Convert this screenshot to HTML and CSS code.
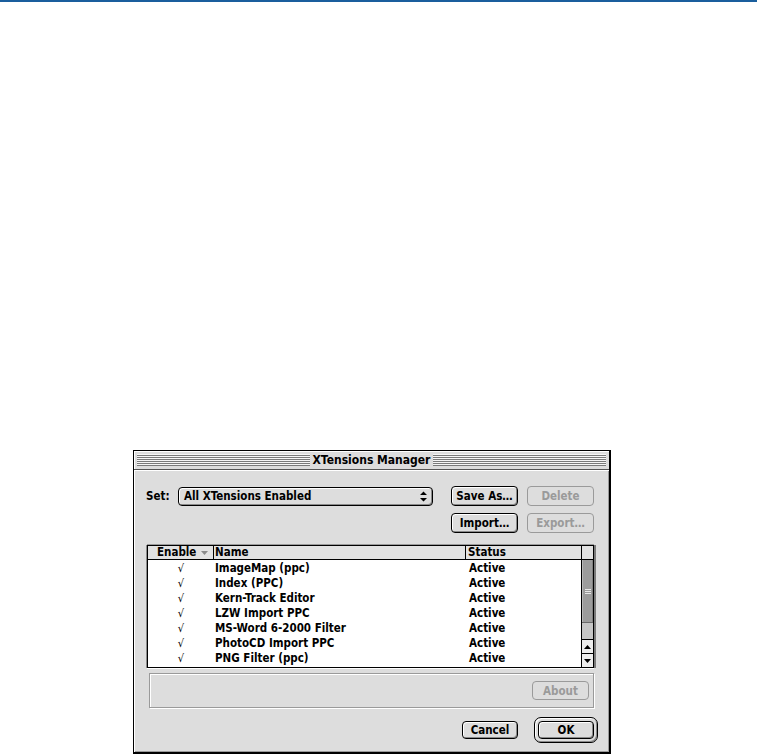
FILE: index.html
```html
<!DOCTYPE html>
<html>
<head>
<meta charset="utf-8">
<title>XTensions Manager</title>
<link rel="stylesheet" href="styles.css">
</head>
<body>
<div class="topbar"></div>
<div class="stage">
  <div class="dialog">
    <div class="titlebar">
      <div class="stripes"></div>
      <div class="title">XTensions Manager</div>
      <div class="stripes"></div>
    </div>
    <div class="content">
      <div class="row row1">
        <span class="label">Set:</span>
        <div class="popup">
          <span class="popup-text">All XTensions Enabled</span>
          <svg class="popup-arrows" width="7" height="11" viewBox="0 0 7 11"><path d="M0 4 L3.5 0.5 L7 4 Z M0 7 L7 7 L3.5 10.5 Z" fill="#000"/></svg>
        </div>
        <div class="btns">
          <button class="btn">Save As…</button>
          <button class="btn disabled">Delete</button>
        </div>
      </div>
      <div class="row row2">
        <div class="btns">
          <button class="btn">Import…</button>
          <button class="btn disabled">Export…</button>
        </div>
      </div>
      <div class="list">
        <div class="list-head">
          <div class="hcell c-enable">Enable<svg class="sort" width="7" height="4" viewBox="0 0 7 4"><path d="M0 0 L7 0 L3.5 4 Z" fill="#8a8a8a"/></svg></div>
          <div class="hcell c-name">Name</div>
          <div class="hcell c-status">Status</div>
          <div class="hcell c-scroll"></div>
        </div>
        <div class="list-body">
          <div class="rows">
            <div class="lrow"><span class="chk">√</span><span class="nm">ImageMap (ppc)</span><span class="st">Active</span></div>
            <div class="lrow"><span class="chk">√</span><span class="nm">Index (PPC)</span><span class="st">Active</span></div>
            <div class="lrow"><span class="chk">√</span><span class="nm">Kern-Track Editor</span><span class="st">Active</span></div>
            <div class="lrow"><span class="chk">√</span><span class="nm">LZW Import PPC</span><span class="st">Active</span></div>
            <div class="lrow"><span class="chk">√</span><span class="nm">MS-Word 6-2000 Filter</span><span class="st">Active</span></div>
            <div class="lrow"><span class="chk">√</span><span class="nm">PhotoCD Import PPC</span><span class="st">Active</span></div>
            <div class="lrow"><span class="chk">√</span><span class="nm">PNG Filter (ppc)</span><span class="st">Active</span></div>
          </div>
          <div class="scrollbar">
            <div class="thumb"><div class="grip"></div></div>
            <div class="track"></div>
            <div class="arrow"><svg width="7" height="4" viewBox="0 0 7 4"><path d="M0 4 L3.5 0 L7 4 Z" fill="#000"/></svg></div>
            <div class="arrow"><svg width="7" height="4" viewBox="0 0 7 4"><path d="M0 0 L7 0 L3.5 4 Z" fill="#000"/></svg></div>
          </div>
        </div>
      </div>
      <div class="infobox">
        <button class="btn disabled about">About</button>
      </div>
      <div class="row bottom">
        <button class="btn cancel">Cancel</button>
        <div class="default-ring"><button class="btn ok">OK</button></div>
      </div>
    </div>
  </div>
</div>
</body>
</html>
```

FILE: styles.css
```css
* { box-sizing: border-box; }

html, body {
  margin: 0;
  padding: 0;
  background: #ffffff;
}

body {
  font-family: "DejaVu Sans Condensed", "DejaVu Sans", sans-serif;
  font-stretch: condensed;
  font-weight: bold;
  font-size: 11.5px;
  color: #000;
}

.topbar {
  height: 2px;
  background: #1a5e9d;
}

.stage {
  padding: 448px 0 0 133px;
}

.dialog {
  width: 478px;
  height: 304px;
  border: 1px solid #000;
  border-right-width: 2px;
  border-bottom-width: 2px;
  background: #dddddd;
  display: flex;
  flex-direction: column;
}

.titlebar {
  height: 19px;
  border-bottom: 1px solid #555;
  display: flex;
  align-items: center;
  padding: 0 3px;
  background: #dddddd;
  box-shadow: inset 1px 1px 0 #fff;
}

.stripes {
  flex: 1;
  height: 12px;
  background: repeating-linear-gradient(to bottom, #f6f6f6 0 1px, #7a7a7a 1px 2px);
}

.title {
  font-size: 12px;
  padding: 0 3px;
  line-height: 16px;
  white-space: nowrap;
}

.content {
  height: 282px;
  padding: 16px 15px 9px 12px;
  box-shadow: inset 1px 1px 0 #fff, inset -1px -1px 0 #9a9a9a;
  display: flex;
  flex-direction: column;
}

.row {
  display: flex;
  align-items: center;
}

.row1 { height: 20px; }

.label {
  width: 32px;
  line-height: 14px;
}

.popup {
  width: 255px;
  height: 19px;
  border: 1px solid #000;
  border-radius: 4px;
  background: #dddddd;
  box-shadow: inset 1px 1px 0 #fff, inset -1px -1px 0 #8a8a8a;
  display: flex;
  align-items: center;
  padding: 0 5px;
}

.popup-text { flex: 1; line-height: 14px; }

.popup-arrows { display: block; }

.btns {
  margin-left: auto;
  display: flex;
  gap: 9px;
}

.btn {
  font: inherit;
  font-stretch: condensed;
  color: #000;
  width: 67px;
  height: 20px;
  padding: 0;
  border: 1px solid #000;
  border-radius: 4px;
  background: #dddddd;
  box-shadow: inset 1px 1px 0 #fff, inset -1px -1px 0 #8a8a8a;
  line-height: 16px;
  text-align: center;
}

.btn.disabled {
  color: #9a9a9a;
  border-color: #9a9a9a;
  box-shadow: none;
}

.row2 {
  margin-top: 7px;
  height: 20px;
}

.list {
  margin-top: 12px;
  margin-left: 1px;
  width: 447px;
  height: 123px;
  border: 1px solid #000;
  background: #fff;
  box-shadow: 0 -1px 0 #9a9a9a, -1px 0 0 #8a8a8a, 2px 0 0 #7a7a7a, 0 1px 0 #fff;
  display: flex;
  flex-direction: column;
}

.list-head {
  display: grid;
  grid-template-columns: 66px 252px 116px 11px;
  height: 14px;
  border-bottom: 1px solid #000;
  background: #e2e2e2;
}

.hcell {
  border-right: 1px solid #000;
  line-height: 13px;
  white-space: nowrap;
  display: flex;
  align-items: center;
}

.hcell.c-scroll { border-right: none; }

.c-enable { padding-left: 9px; }
.c-enable .sort { margin-left: 5px; }
.c-name { padding-left: 1px; }
.c-status { padding-left: 2px; }

.list-body {
  flex: 1;
  display: flex;
}

.rows {
  flex: 1;
  padding-top: 1px;
}

.lrow {
  display: grid;
  grid-template-columns: 66px 252px 1fr;
  height: 15px;
  line-height: 15px;
  white-space: nowrap;
}

.chk {
  text-align: center;
  font-weight: normal;
  font-size: 11px;
}

.nm { padding-left: 1px; }
.st { padding-left: 3px; }

.scrollbar {
  width: 12px;
  border-left: 1px solid #000;
  display: flex;
  flex-direction: column;
}

.thumb {
  height: 62px;
  background: #9c9c9c;
  box-shadow: inset 1px 0 0 #b8b8b8, inset -1px 0 0 #808080;
  display: flex;
  align-items: center;
  justify-content: center;
}

.grip {
  width: 6px;
  height: 5px;
  background: repeating-linear-gradient(to bottom, #e8e8e8 0 1px, #9c9c9c 1px 2px);
}

.track {
  flex: 1;
  background: #c6c6c6;
  border-top: 1px solid #6a6a6a;
}

.arrow {
  height: 14px;
  border-top: 1px solid #000;
  background: #eeeeee;
  display: flex;
  align-items: center;
  justify-content: center;
}

.arrow svg { display: block; }

.infobox {
  margin-top: 5px;
  margin-left: 3px;
  width: 445px;
  height: 35px;
  border: 1px solid #9a9a9a;
  box-shadow: 1px 1px 0 #fff, inset 1px 1px 0 #fff;
  display: flex;
  justify-content: flex-end;
  align-items: flex-start;
  padding: 7px 4px 0 0;
}

.about {
  width: 57px;
  height: 19px;
}

.bottom {
  margin-top: 9px;
  margin-right: -4px;
  justify-content: flex-end;
  height: 26px;
}

.cancel {
  width: 56px;
  height: 18px;
  line-height: 15px;
}

.default-ring {
  margin-left: 16px;
  width: 64px;
  height: 26px;
  border: 1px solid #000;
  border-radius: 7px;
  padding: 3px;
  background: #dddddd;
  box-shadow: inset 1px 1px 0 #fff, inset -1px -1px 0 #8a8a8a;
}

.ok {
  width: 56px;
  height: 18px;
  line-height: 15px;
}
```
